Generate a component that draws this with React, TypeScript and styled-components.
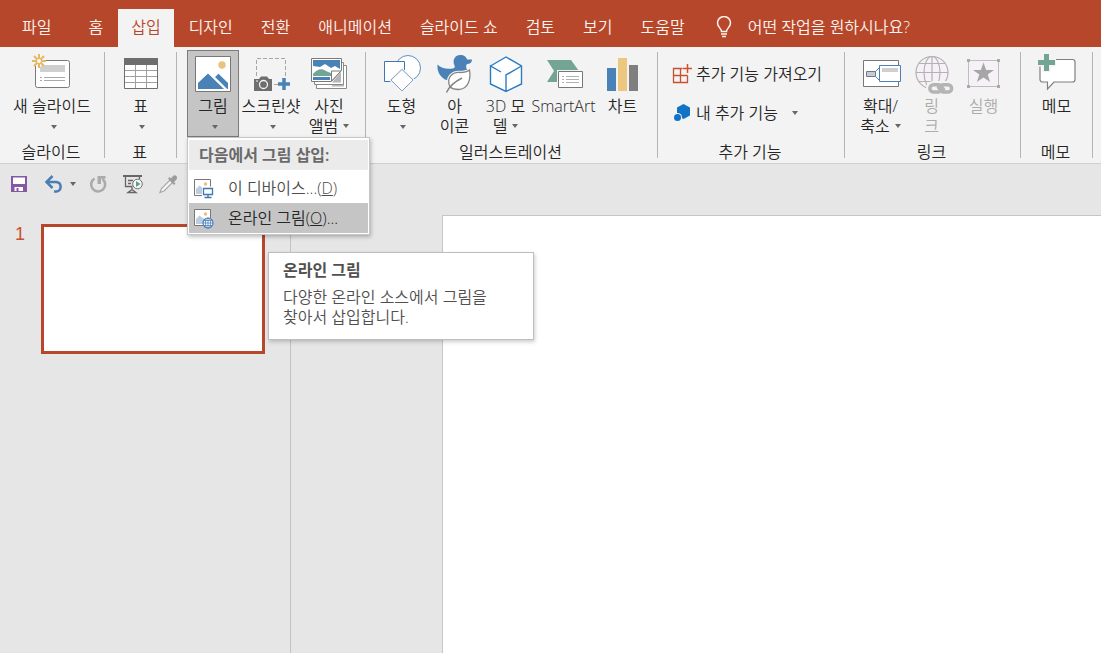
import React from "react";
import styled, { createGlobalStyle, css } from "styled-components";

const GlobalStyle = createGlobalStyle`
  *, *::before, *::after { box-sizing: border-box; }
  body {
    margin: 0;
    background: #e6e6e6;
    color: #262626;
    font-family: "Open Sans", "Noto Sans CJK KR", sans-serif;
    font-size: 16px;
    font-weight: 350;
    line-height: 20px;
  }
  button {
    font: inherit;
    color: inherit;
    background: none;
    border: 0;
    padding: 0;
    margin: 0;
    white-space: nowrap;
  }
  svg { display: block; flex: none; }
`;

const Window = styled.div`
  display: flex;
  flex-direction: column;
  min-height: 100vh;
  overflow: hidden;
`;

/* ---------- Tab bar ---------- */

const TabBar = styled.nav`
  display: flex;
  align-items: stretch;
  gap: 2px;
  height: 47px;
  padding-top: 9px;
  background: #b7472a;
`;

const Tab = styled.button<{ $active?: boolean; $wide?: boolean }>`
  padding: 0 ${(p) => (p.$wide ? 22 : 13)}px 2px;
  color: ${(p) => (p.$active ? "#b7472a" : "#fdf3ef")};
  background: ${(p) => (p.$active ? "#f3f3f3" : "transparent")};
`;

const TellMe = styled.button`
  display: flex;
  align-items: center;
  gap: 16px;
  margin-left: 16px;
  padding-bottom: 2px;
  color: #fdf3ef;
`;

/* ---------- Ribbon ---------- */

const Ribbon = styled.div`
  display: flex;
  height: 117px;
  padding-top: 3px;
  background: #f3f3f3;
  border-bottom: 1px solid #cfcfcf;
`;

const Group = styled.section<{ $width: number }>`
  position: relative;
  display: flex;
  flex: none;
  flex-direction: column;
  width: ${(p) => p.$width}px;
  padding-right: 1px;
  &::after {
    content: "";
    position: absolute;
    right: 0;
    top: 2px;
    bottom: 5px;
    width: 1px;
    background: #b4b4b4;
  }
`;

const GroupBody = styled.div`
  display: flex;
  justify-content: center;
  gap: 1px;
  height: 87px;
`;

const GroupName = styled.h2`
  margin: 5px 0 0;
  padding-right: 2px;
  font-size: 16px;
  font-weight: inherit;
  line-height: 20px;
  text-align: center;
`;

const BigButton = styled.button<{ $width: number; $open?: boolean }>`
  display: flex;
  flex-direction: column;
  align-items: center;
  width: ${(p) => p.$width}px;
  height: 87px;
  padding-top: 3px;
  border: 1px solid transparent;
  ${(p) =>
    p.$open &&
    css`
      background: #c5c5c5;
      border-color: #7b7b7b;
    `}
  &:disabled { color: #acacac; }
`;

const Label = styled.span`
  display: flex;
  flex-direction: column;
  align-items: center;
  margin-top: 2px;
`;

const CaretShape = styled.span`
  flex: none;
  border: solid transparent;
  border-width: 4px 3px 0;
  border-top-color: #666;
`;

const Line = styled.span`
  display: flex;
  align-items: center;
  justify-content: center;
  gap: 5px;
  height: 20px;
`;

const CaretLine = styled(Line)`
  padding: 1px 0 0 4px;
`;

const AddinList = styled.div`
  display: flex;
  flex: 1;
  flex-direction: column;
  gap: 19px;
  padding: 14px 0 0 14px;
`;

const SmallButton = styled.button`
  display: flex;
  align-items: center;
  gap: 4px;
  height: 20px;
  ${CaretShape} { margin-left: 10px; }
`;

/* ---------- Picture menu ---------- */

const Anchor = styled.div`
  position: relative;
`;

const Menu = styled.div`
  position: absolute;
  z-index: 2;
  top: 87px;
  left: 0;
  width: 183px;
  padding: 2px 1px 1px;
  background: #fff;
  border: 1px solid #c6c6c6;
  box-shadow: 1px 2px 4px rgba(0, 0, 0, 0.25);
`;

const MenuTitle = styled.div`
  height: 30px;
  margin-bottom: 3px;
  padding-left: 10px;
  background: #ebebeb;
  color: #6a6a6a;
  font-weight: 600;
  line-height: 30px;
  white-space: nowrap;
`;

const MenuItem = styled.button<{ $hot?: boolean }>`
  display: flex;
  align-items: center;
  gap: 14px;
  width: 100%;
  height: 30px;
  padding-left: 5px;
  color: ${(p) => (p.$hot ? "#262626" : "#4d4d4d")};
  background: ${(p) => (p.$hot ? "#c5c5c5" : "#fff")};
`;

const Tooltip = styled.div`
  position: absolute;
  z-index: 3;
  top: 202px;
  left: 81px;
  width: 266px;
  height: 88px;
  padding: 7px 14px;
  background: #fff;
  border: 1px solid #bebebe;
  box-shadow: 1px 2px 4px rgba(0, 0, 0, 0.2);
  color: #505050;
  strong { display: block; margin-bottom: 7px; font-weight: 600; }
  p { margin: 0; white-space: nowrap; }
`;

/* ---------- Quick access and workspace ---------- */

const QuickBar = styled.div`
  display: flex;
  align-items: center;
  gap: 15px;
  height: 41px;
  padding: 0 0 2px 9px;
`;

const QuickButton = styled.button`
  display: flex;
  align-items: center;
  gap: 6px;
  ${CaretShape} { margin-right: -3px; }
`;

const Workspace = styled.main`
  display: flex;
  flex: 1;
`;

const SlideList = styled.aside`
  display: flex;
  flex: none;
  align-items: flex-start;
  width: 291px;
  padding: 19px 25px 0 15px;
  border-right: 1px solid #c3c3c3;
`;

const SlideNumber = styled.span`
  width: 26px;
  color: #c8502f;
  font-family: "Liberation Sans", sans-serif;
  font-size: 18px;
`;

const Thumbnail = styled.button`
  flex: 1;
  aspect-ratio: 224 / 130;
  background: #fff;
  border: 3px solid #b7472a;
`;

const Stage = styled.div`
  display: flex;
  flex: 1;
  padding: 10px 0 0 151px;
`;

const Slide = styled.div`
  flex: 1;
  background: #fff;
  border: solid #c6c6c6;
  border-width: 1px 0 0 1px;
`;

/* ---------- Icons ---------- */

type IconProps = { children: React.ReactNode; size?: number };

const Icon = ({ children, size = 40 }: IconProps) => (
  <svg
    width={size}
    height={size}
    viewBox={`0 0 ${size} ${size}`}
    fill="none"
    overflow="visible"
    aria-hidden="true"
  >
    {children}
  </svg>
);

const NewSlideIcon = () => (
  <Icon>
    <rect x="3.5" y="6.5" width="34" height="27" rx="2" fill="#fff" stroke="#7a7a7a" />
    <path d="M8 11h25v7H8z" fill="#cfcfcf" />
    <path d="M8 23.5h2M12 23.5h21M8 26.5h2M12 26.5h21" stroke="#a8a8a8" />
    <circle cx="7" cy="7" r="6" fill="#f3f3f3" />
    <path d="M7 0v14M0 7h14M2 2l10 10M12 2L2 12" stroke="#e8b765" strokeWidth="2" />
    <circle cx="7" cy="7" r="2.6" fill="#fff" stroke="#e8b765" strokeWidth="1.4" />
  </Icon>
);

const TableIcon = () => (
  <Icon>
    <path d="M3.5 4.5h33v30h-33z" fill="#fff" stroke="#6e6e6e" />
    <path d="M4 16.5h32M4 22.5h32M4 28.5h32M14.5 11v23M25.5 11v23" stroke="#a0a0a0" />
    <path d="M3 4h34v7H3z" fill="#6e6e6e" />
  </Icon>
);

const PictureIcon = () => (
  <Icon>
    <path d="M2.5 2.5h35v35h-35z" fill="#fff" stroke="#777" />
    <circle cx="29" cy="11" r="3.7" fill="#eac282" />
    <path d="M5 29l10-9.5 16 15.5H5z" fill="#4a82b8" />
    <path d="M22 23l3.5-3.2L35 29v6h-.8z" fill="#4a82b8" />
  </Icon>
);

const ScreenshotIcon = () => (
  <Icon>
    <path d="M5.5 22V4.5h29V22M23 30.500h4" stroke="#a6a6a6" strokeDasharray="4 2" />
    <path d="M3 25h5l2-2.500h6l2 2.500h3v12H3z" fill="#6e6e6e" />
    <circle cx="12.500" cy="30.500" r="4" fill="#6e6e6e" stroke="#f3f3f3" strokeWidth="1.300" />
    <path d="M5 27h2" stroke="#f3f3f3" />
    <path d="M33 24v12M27 30h12" stroke="#4a82b8" strokeWidth="3.500" />
  </Icon>
);

const AlbumIcon = () => (
  <Icon>
    <path d="M7.500 11.500h30v23h-30z" fill="#fff" stroke="#8a8a8a" />
    <path d="M22 32.500l13-12v12z" fill="#b5b5b5" />
    <path d="M5.500 8.500h29v22h-29z" fill="#fff" stroke="#8a8a8a" />
    <path d="M23 28.500l9-10.500v10.500z" fill="#b5b5b5" />
    <path d="M2.500 4.500h30v12l-10 11h-20z" fill="#fff" stroke="#7a7a7a" />
    <path d="M4 6h27v9l-5-3-4 2-6-4-5 3-7-1z" fill="#4a82b8" />
    <path d="M4 20c4-5 9-6 13-3l7 3-2 2H4z" fill="#74a594" />
    <path d="M4 23h17v3H4z" fill="#4a82b8" />
    <path d="M22.500 27V17h9.500z" fill="#fff" stroke="#7a7a7a" />
  </Icon>
);

const ShapesIcon = () => (
  <Icon>
    <circle cx="26" cy="14" r="12.500" fill="#fff" stroke="#5c91c4" />
    <path d="M2.500 7.500h20v20h-20z" fill="#fff" stroke="#3f78b0" />
    <path d="M20 15.500L31 26 20 37 9 26z" fill="#fff" stroke="#f3f3f3" strokeWidth="3" />
    <path d="M20 15.500L31 26 20 37 9 26z" fill="#fff" stroke="#7da0c4" />
  </Icon>
);

const DuckIcon = () => (
  <Icon>
    <path
      d="M2.500 10.500c4 4 9 5 15 4 1.500 0 3-1 2-3C17 6 20 1 25.500 1c3.500 0 6 2 6.500 4.500h5c0 3-2 4.500-5 4.500-1 2-1.500 3 0 5.500 1 2 1 5-1 7.500L15 27C7 26 1.500 19 2.500 10.500z"
      fill="#4a82b8"
    />
    <path
      d="M15 33c-4-9 2-15 10-14.500 4 0 7-.5 9.500-2.500 1.500 9-1 19-11 19.500-3.500 0-6-.5-8.500-2.500z"
      fill="#fff"
      stroke="#f3f3f3"
      strokeWidth="3.500"
    />
    <path
      d="M15 33c-4-9 2-15 10-14.500 4 0 7-.5 9.500-2.500 1.500 9-1 19-11 19.500-3.500 0-6-.5-8.500-2.500z"
      fill="#fff"
      stroke="#858585"
      strokeWidth="1.300"
    />
    <path d="M11.500 38.500C14 33 19 28 27 24" stroke="#858585" strokeWidth="1.500" />
  </Icon>
);

const CubeIcon = () => (
  <Icon>
    <path d="M20 3l15.500 9v18L20 37.500 4.500 30V12z" fill="#fff" />
    <path
      d="M4.500 12L20 3l15.500 9v18L20 37.500 4.500 30V12l10.500 6M20 37.500V21l15.500-9"
      stroke="#2b7cc4"
      strokeWidth="1.400"
    />
  </Icon>
);

const SmartArtIcon = () => (
  <Icon>
    <path d="M3 6h24l8 11-8 11H3l7-11z" fill="#74a594" />
    <path d="M13 16h27v19H13z" fill="#f3f3f3" />
    <path d="M14.500 17.500h24v16h-24z" fill="#fff" stroke="#777" />
    <path d="M18 22.500h2M22 22.500h13M18 25.500h2M22 25.500h13M18 28.500h2M22 28.500h13" stroke="#b0b0b0" />
  </Icon>
);

const ChartIcon = () => (
  <Icon>
    <path d="M4 14h9v23H4z" fill="#4a82b8" />
    <path d="M15 4h9v33h-9z" fill="#edc77f" />
    <path d="M26 11h9v26h-9z" fill="#7f7f7f" />
  </Icon>
);

const ZoomIcon = () => (
  <Icon>
    <path d="M2.500 6.500h35v26h-35z" fill="#fff" stroke="#777" />
    <path d="M5.500 17.500h9v5h-9z" fill="#bccddd" stroke="#777" />
    <path d="M14.500 17.500l4-4M14.500 22.500l4 4" stroke="#4a82b8" />
    <path d="M18.500 11.500h21v16h-21z" fill="#fff" stroke="#4a82b8" />
    <path d="M21 14h16v4H21z" fill="#cfcfcf" />
  </Icon>
);

const LinkIcon = () => (
  <Icon>
    <g stroke="#b4b0b4" strokeWidth="1.200">
      <circle cx="20" cy="18.500" r="16" fill="#f6f1f6" />
      <ellipse cx="20" cy="18.500" rx="8" ry="16" />
      <path d="M20 2.500v32M4 18.500h32M7 9.500h26M7 27.500h26" />
    </g>
    <path d="M21 34h16" stroke="#f3f3f3" strokeWidth="14" strokeLinecap="round" />
    <g stroke="#b4b4b4" strokeWidth="3.500" strokeLinecap="round">
      <path d="M27 38h-5.500a3.600 3.600 0 010-7.200h5c3.500 0 3 2.700 5 4.500" />
      <path d="M30.500 30.800H36A3.600 3.600 0 0136 38h-4c-3.500 0-3.500-2.700-5.500-4.500" />
    </g>
  </Icon>
);

const ActionIcon = () => (
  <Icon>
    <path d="M4.500 6.500h30v26h-30z" fill="#f6f1f6" stroke="#c2bcc2" />
    <path d="M3 5h3v3H3zM33 5h3v3h-3zM3 31h3v3H3zM33 31h3v3h-3z" fill="#aaa" />
    <path
      d="M19.500 8.500l2.600 7.400h7.900l-6.300 4.700 2.400 7.400-6.600-4.600-6.600 4.600 2.400-7.400L9 15.900h7.900z"
      fill="#a6a6a6"
    />
  </Icon>
);

const CommentIcon = () => (
  <Icon>
    <path
      d="M5.500 5.500h30a2.500 2.500 0 012.500 2.500v17.500a2.500 2.500 0 01-2.500 2.500H17l-6.500 7V28h-5A2.500 2.500 0 013 25.500V8a2.500 2.500 0 012.500-2.500z"
      fill="#fff"
      stroke="#7f7f7f"
      strokeWidth="1.200"
    />
    <path d="M9.500-1v19M0 8.500h19" stroke="#f3f3f3" strokeWidth="8" />
    <path d="M9.500 0v17M1 8.500h17" stroke="#74a594" strokeWidth="5" />
  </Icon>
);

const BulbIcon = () => (
  <svg width="16" height="22" viewBox="0 0 16 22" fill="none" stroke="#fdf3ef" aria-hidden="true">
    <path
      d="M5.500 15.500c0-3-4-4.500-4-8.500a6.500 6.500 0 0113 0c0 4-4 5.500-4 8.500z"
      strokeWidth="1.500"
    />
    <path d="M5 18h6M6 20.500h4" strokeWidth="1.500" />
  </svg>
);

const StoreIcon = () => (
  <Icon size={20}>
    <path
      d="M10.500 4.500h-9v14h14v-7M8.500 4.500v14M1.500 11.500h14"
      stroke="#c8502f"
      strokeWidth="1.300"
    />
    <path d="M15.500 0v9M11 4.500h9" stroke="#d2502a" strokeWidth="1.500" />
  </Icon>
);

const MyAddinsIcon = () => (
  <Icon size={20}>
    <path d="M11.500 1l6.500 3.500v8L11.500 16 5 12.500v-8z" fill="#1173c5" />
    <circle cx="5.500" cy="14.500" r="4.500" fill="#f3f3f3" />
    <circle cx="5.500" cy="14.500" r="3.500" fill="#1173c5" />
  </Icon>
);

const MenuPicture = () => (
  <>
    <path d="M.5 1.500h16v16H.5z" fill="#fff" stroke="#777" />
    <circle cx="11.500" cy="6" r="1.700" fill="#e8c080" />
    <path d="M2 16v-5l3.500-3.500L10 11v5z" fill="#bccde0" />
  </>
);

const DeviceIcon = () => (
  <Icon size={20}>
    <MenuPicture />
    <path d="M8 8.500h12v11H8z" fill="#fff" />
    <path d="M9.500 10.500h9v6h-9zM14 16.500v3M10.500 19.500h7" stroke="#3f78b0" strokeWidth="1.300" />
  </Icon>
);

const OnlineIcon = () => (
  <Icon size={20}>
    <MenuPicture />
    <circle cx="14" cy="15" r="5" fill="#fff" stroke="#4a82b8" strokeWidth="1.200" />
    <path
      d="M14 10v10M9 15h10M10 12.500h8M10 17.500h8"
      stroke="#4a82b8"
      strokeWidth=".8"
    />
    <ellipse cx="14" cy="15" rx="2.500" ry="5" stroke="#4a82b8" strokeWidth=".8" />
  </Icon>
);

const SaveIcon = () => (
  <Icon size={20}>
    <path d="M2 2h16v16H2z" fill="#8558a5" />
    <path d="M4 3.500h12v6.500H4z" fill="#fff" />
    <path d="M5.500 13h8.500v4H5.500z" fill="#fff" />
    <path d="M7.500 14h2v3h-2z" fill="#8558a5" />
  </Icon>
);

const UndoIcon = () => (
  <Icon size={20}>
    <path d="M2 8h10.500a4.800 4.800 0 010 9.500H10" stroke="#4a7fb5" strokeWidth="2.500" />
    <path d="M8.500 2L2.500 8l6 6" stroke="#4a7fb5" strokeWidth="2.500" />
  </Icon>
);

const RedoIcon = () => (
  <Icon size={20}>
    <path d="M6.500 4.500a7 7 0 108 .5" stroke="#ababab" strokeWidth="2.600" />
    <path d="M9.500 2h8v2.700h-4.500V10H9.500z" fill="#ababab" />
  </Icon>
);

const ShowIcon = () => (
  <Icon size={20}>
    <path d="M0 2h19" stroke="#666" strokeWidth="2" />
    <path d="M2.500 3v9.500h7M16.500 3v2M5 6.500h5M5 9.500h3M9 13v3M5 18.500l4-3 4 3z" stroke="#666" strokeWidth="1.300" />
    <circle cx="14.500" cy="10" r="4.800" fill="#f8f8f8" stroke="#6e6e6e" />
    <path d="M13 7l4.500 3-4.500 3z" fill="#58a382" />
  </Icon>
);

const DropperIcon = () => (
  <Icon size={20}>
    <path d="M2 18.500l1.500-4L12 6l2.500 2.500L6 17z" fill="#f6f6f6" stroke="#a6a6a6" strokeWidth="1.200" />
    <path
      d="M10 4.500l1.500-1.500 1.500 1.500 2-2.500c2-2 5.500 1 3.500 3.500L16 8l1.500 1.500L16 11z"
      fill="#9c9c9c"
    />
  </Icon>
);

/* ---------- Page ---------- */

const Caret = () => <CaretShape aria-hidden="true" />;

type RibbonButtonProps = {
  icon: React.ReactNode;
  lines: string[];
  width: number;
  caret?: boolean;
  open?: boolean;
  disabled?: boolean;
};

const RibbonButton = ({ icon, lines, width, caret, open, disabled }: RibbonButtonProps) => (
  <BigButton $width={width} $open={open} disabled={disabled}>
    {icon}
    <Label>
      <Line>{lines[0]}</Line>
      {lines[1] && (
        <Line>
          {lines[1]}
          {caret && <Caret />}
        </Line>
      )}
      {caret && !lines[1] && (
        <CaretLine>
          <Caret />
        </CaretLine>
      )}
    </Label>
  </BigButton>
);

const tabs = ["파일", "홈", "삽입", "디자인", "전환", "애니메이션", "슬라이드 쇼", "검토", "보기", "도움말"];

export default function App() {
  return (
    <Window>
      <GlobalStyle />
      <TabBar>
        {tabs.map((name, i) => (
          <Tab key={name} $active={name === "삽입"} $wide={i === 0}>
            {name}
          </Tab>
        ))}
        <TellMe>
          <BulbIcon />
          어떤 작업을 원하시나요?
        </TellMe>
      </TabBar>

      <Ribbon>
        <Group $width={105}>
          <GroupBody>
            <RibbonButton icon={<NewSlideIcon />} lines={["새 슬라이드"]} width={92} caret />
          </GroupBody>
          <GroupName>슬라이드</GroupName>
        </Group>

        <Group $width={72}>
          <GroupBody>
            <RibbonButton icon={<TableIcon />} lines={["표"]} width={51} caret />
          </GroupBody>
          <GroupName>표</GroupName>
        </Group>

        <Group $width={189}>
          <GroupBody>
            <Anchor>
              <RibbonButton icon={<PictureIcon />} lines={["그림"]} width={52} caret open />
              <Menu>
                <MenuTitle>다음에서 그림 삽입:</MenuTitle>
                <MenuItem>
                  <DeviceIcon />
                  <span>이 디바이스...(<u>D</u>)</span>
                </MenuItem>
                <MenuItem $hot>
                  <OnlineIcon />
                  <span>온라인 그림(<u>O</u>)...</span>
                </MenuItem>
              </Menu>
              <Tooltip role="tooltip">
                <strong>온라인 그림</strong>
                <p>
                  다양한 온라인 소스에서 그림을
                  <br />
                  찾아서 삽입합니다.
                </p>
              </Tooltip>
            </Anchor>
            <RibbonButton icon={<ScreenshotIcon />} lines={["스크린샷"]} width={62} caret />
            <RibbonButton icon={<AlbumIcon />} lines={["사진", "앨범"]} width={52} caret />
          </GroupBody>
        </Group>

        <Group $width={292}>
          <GroupBody>
            <RibbonButton icon={<ShapesIcon />} lines={["도형"]} width={52} caret />
            <RibbonButton icon={<DuckIcon />} lines={["아", "이콘"]} width={52} />
            <RibbonButton icon={<CubeIcon />} lines={["3D 모", "델"]} width={48} caret />
            <RibbonButton icon={<SmartArtIcon />} lines={["SmartArt"]} width={66} />
            <RibbonButton icon={<ChartIcon />} lines={["차트"]} width={50} />
          </GroupBody>
          <GroupName>일러스트레이션</GroupName>
        </Group>

        <Group $width={187}>
          <GroupBody>
            <AddinList>
              <SmallButton>
                <StoreIcon />
                추가 기능 가져오기
              </SmallButton>
              <SmallButton>
                <MyAddinsIcon />
                내 추가 기능
                <Caret />
              </SmallButton>
            </AddinList>
          </GroupBody>
          <GroupName>추가 기능</GroupName>
        </Group>

        <Group $width={176}>
          <GroupBody>
            <RibbonButton icon={<ZoomIcon />} lines={["확대/", "축소"]} width={50} caret />
            <RibbonButton icon={<LinkIcon />} lines={["링", "크"]} width={50} disabled />
            <RibbonButton icon={<ActionIcon />} lines={["실행"]} width={52} disabled />
          </GroupBody>
          <GroupName>링크</GroupName>
        </Group>

        <Group $width={72}>
          <GroupBody>
            <RibbonButton icon={<CommentIcon />} lines={["메모"]} width={51} />
          </GroupBody>
          <GroupName>메모</GroupName>
        </Group>
      </Ribbon>

      <QuickBar>
        <QuickButton aria-label="저장"><SaveIcon /></QuickButton>
        <QuickButton aria-label="실행 취소"><UndoIcon /><Caret /></QuickButton>
        <QuickButton aria-label="다시 실행"><RedoIcon /></QuickButton>
        <QuickButton aria-label="슬라이드 쇼"><ShowIcon /></QuickButton>
        <QuickButton aria-label="스포이트"><DropperIcon /></QuickButton>
      </QuickBar>

      <Workspace>
        <SlideList>
          <SlideNumber>1</SlideNumber>
          <Thumbnail aria-label="슬라이드 1" />
        </SlideList>
        <Stage>
          <Slide />
        </Stage>
      </Workspace>
    </Window>
  );
}
